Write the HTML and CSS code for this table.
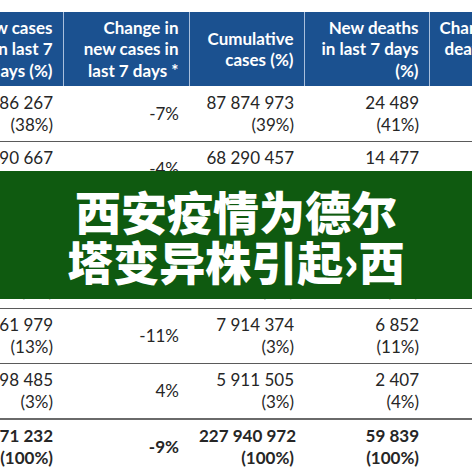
FILE: index.html
```html
<!DOCTYPE html>
<html lang="zh-CN">
<head>
  <meta charset="UTF-8" />
  <meta name="viewport" content="width=device-width, initial-scale=1.0"/>
  <title>西安疫情</title>
  <link rel="stylesheet" href="styles.css">
</head>
<body>
  <div class="page">
    <!-- weekly table, cropped on both sides -->
    <table class="stats">
      <colgroup>
        <col class="c-cases">
        <col class="c-change">
        <col class="c-cum">
        <col class="c-deaths">
        <col class="c-dchange">
      </colgroup>
      <thead>
        <tr>
          <th>New cases<br>in last 7<br>days (%)</th>
          <th>Change in<br>new cases in<br>last 7 days *</th>
          <th>Cumulative<br>cases (%)</th>
          <th>New deaths<br>in last 7 days<br>(%)</th>
          <th>Change in new<br>deaths in last<br>7 days *</th>
        </tr>
      </thead>
      <tbody>
        <tr>
          <td>8 886 267<br>(38%)</td>
          <td>-7%</td>
          <td>87 874 973<br>(39%)</td>
          <td>24 489<br>(41%)</td>
          <td>-5%</td>
        </tr>
        <tr>
          <td>6 090 667<br>(26%)</td>
          <td>-4%</td>
          <td>68 290 457<br>(30%)</td>
          <td>14 477<br>(24%)</td>
          <td>-7%</td>
        </tr>
        <tr>
          <td>3 713 872<br>(16%)</td>
          <td>-10%</td>
          <td>45 432 013<br>(20%)</td>
          <td>10 614<br>(18%)</td>
          <td>-13%</td>
        </tr>
        <tr>
          <td>1 720 062<br>(7%)</td>
          <td>-16%</td>
          <td>12 518 250<br>(5%)</td>
          <td>4 874<br>(8%)</td>
          <td>-10%</td>
        </tr>
        <tr>
          <td>3 461 979<br>(13%)</td>
          <td>-11%</td>
          <td>7 914 374<br>(3%)</td>
          <td>6 852<br>(11%)</td>
          <td>-8%</td>
        </tr>
        <tr>
          <td>698 485<br>(3%)</td>
          <td>4%</td>
          <td>5 911 505<br>(3%)</td>
          <td>2 407<br>(4%)</td>
          <td>-6%</td>
        </tr>
        <tr class="total">
          <td>23 571 232<br>(100%)</td>
          <td>-9%</td>
          <td>227 940 972<br>(100%)</td>
          <td>59 839<br>(100%)</td>
          <td>-8%</td>
        </tr>
      </tbody>
    </table>

    <!-- headline banner over the table -->
    <div class="banner">
      <p class="headline">西安疫情为德尔<br>塔变异株引起›西</p>
    </div>
  </div>
</body>
</html>
```

FILE: styles.css
```css
:root {
  --head-blue: #1b5190;
  --head-line: #a9bfdc;
  --banner: #0f5a10;
  --text: #262626;
  --rule: #5a5a5a;
}

* {
  box-sizing: border-box;
}

body {
  margin: 0;
  padding: 0;
  background: #fff;
  font-family: Lato, 'Liberation Sans', sans-serif;
}

.page {
  position: relative;
  width: 472px;
  height: 472px;
  overflow: hidden;
  padding-top: 12px;
}

.stats {
  border-collapse: collapse;
  table-layout: fixed;
  width: 611px;
  margin-left: -57px;
  color: var(--text);
  font-size: 17px;
}

.c-cases { width: 120px; }
.c-change { width: 126px; }
.c-cum { width: 115px; }
.c-deaths { width: 125px; }
.c-dchange { width: 125px; }

.stats th {
  background: var(--head-blue);
  color: #fff;
  font-weight: bold;
  text-align: right;
  vertical-align: middle;
  line-height: 21.5px;
  height: 74px;
  padding: 0 10px;
  white-space: nowrap;
  border-left: 1px solid var(--head-line);
}

.stats th:first-child {
  border-left: none;
}

.stats td {
  text-align: right;
  vertical-align: middle;
  line-height: 22px;
  height: 55.5px;
  padding: 0 10px;
  white-space: nowrap;
  border-left: none;
  border-right: none;
  border-bottom: 1px solid var(--rule);
}

.stats tr.total td {
  font-weight: bold;
  border-top: 2px solid #6a6a6a;
  border-bottom: none;
}

.banner {
  position: absolute;
  left: 0;
  top: 171px;
  width: 100%;
  height: 128px;
  background: var(--banner);
  display: flex;
  align-items: center;
  justify-content: center;
}

.headline {
  margin: 0;
  color: #fff;
  font-family: 'Noto Sans CJK SC', 'Noto Sans', sans-serif;
  font-weight: 900;
  font-size: 46px;
  line-height: 50px;
  text-align: center;
}
```
